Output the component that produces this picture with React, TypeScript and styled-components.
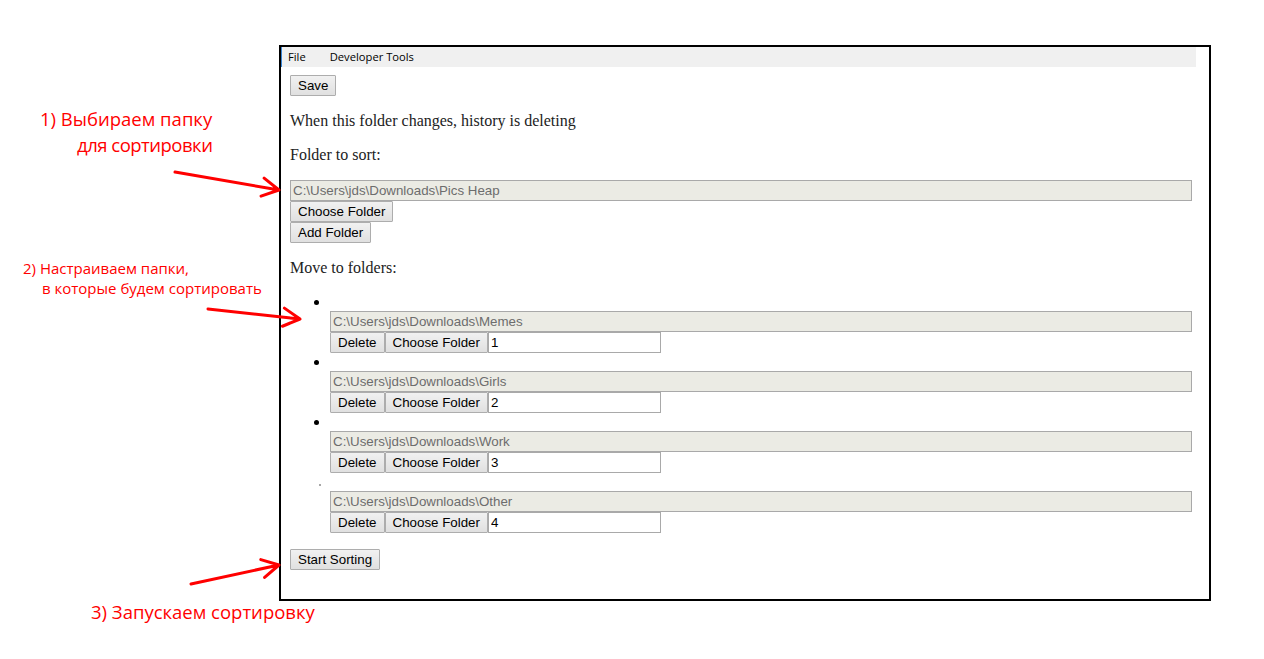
import styled, { createGlobalStyle, css } from 'styled-components'

const GlobalStyle = createGlobalStyle`
  html, body {
    margin: 0;
    padding: 0;
    background: #fff;
  }
`

const Page = styled.div`
  position: relative;
  width: 1264px;
  height: 659px;
  overflow: hidden;
  padding-top: 45px;
  box-sizing: border-box;
`

const Frame = styled.div`
  width: 932px;
  height: 556px;
  margin-left: 279px;
  box-sizing: border-box;
  border: 2px solid #000;
  background: #fff;
`

const MenuBar = styled.div`
  display: flex;
  align-items: center;
  width: 915px;
  height: 20px;
  padding-bottom: 1px;
  box-sizing: border-box;
  background: #f0f0f0;
  border-left: 1px solid #3a86d4;
  font-family: 'Open Sans', sans-serif;
  font-size: 11.2px;
  color: #000;
`

const MenuItem = styled.span`
  padding: 0 6px;
  margin-right: 12px;
`

const Content = styled.div`
  width: 918px;
  margin-left: 1px;
  padding: 8px;
  box-sizing: border-box;
  font-family: 'Liberation Serif', 'Times New Roman', serif;
  font-size: 16px;
  color: #222;
`

const Text = styled.p`
  margin: 16px 0;
  line-height: 18px;
`

const controlFont = css`
  font-family: 'Liberation Sans', Arial, sans-serif;
  font-size: 13.33px;
`

const Button = styled.button<{ $block?: boolean }>`
  ${controlFont};
  display: ${(p) => (p.$block ? 'block' : 'inline-block')};
  height: 21px;
  padding: 0 7px;
  margin: 0;
  box-sizing: border-box;
  border: 1px solid #adadad;
  border-radius: 1px;
  background: linear-gradient(#f1f1f1, #e0e0e0);
  color: #000;
  line-height: 19px;
  white-space: nowrap;
`

const PathInput = styled.input`
  ${controlFont};
  display: block;
  width: 100%;
  height: 21px;
  margin: 0;
  padding: 0 2px;
  box-sizing: border-box;
  border: 1px solid #a9a9a9;
  background: #ebebe4;
  color: #6d6d6d;
`

const OrderInput = styled.input`
  ${controlFont};
  width: 173px;
  height: 21px;
  margin: 0;
  padding: 0 2px;
  box-sizing: border-box;
  border: 1px solid #a9a9a9;
  background: #fff;
  color: #000;
`

const List = styled.ul`
  margin: 16px 0;
  padding-left: 40px;
`

const Item = styled.li<{ $faint?: boolean }>`
  list-style: disc;
  &::marker {
    color: #000;
  }
  ${(p) =>
    p.$faint &&
    css`
      &::marker {
        color: #8a8a8a;
        font-size: 8px;
      }
    `}
`

const ItemHead = styled.div`
  height: 18px;
  line-height: 18px;
`

const ItemRow = styled.div`
  display: flex;
  align-items: stretch;
`

const Callout = styled.div<{ $top: number; $left: number; $size: number; $lh: number }>`
  position: absolute;
  top: ${(p) => p.$top}px;
  left: ${(p) => p.$left}px;
  font-family: 'Open Sans', sans-serif;
  font-size: ${(p) => p.$size}px;
  line-height: ${(p) => p.$lh}px;
  color: #ff0000;
  white-space: nowrap;
`

const CalloutLine = styled.div<{ $indent?: number; $spacing?: number }>`
  padding-left: ${(p) => p.$indent || 0}px;
  letter-spacing: ${(p) => p.$spacing || 0}px;
`

const Arrows = styled.svg`
  position: absolute;
  inset: 0;
  pointer-events: none;
`

const folders = [
  { path: 'C:\\Users\\jds\\Downloads\\Memes', order: '1' },
  { path: 'C:\\Users\\jds\\Downloads\\Girls', order: '2' },
  { path: 'C:\\Users\\jds\\Downloads\\Work', order: '3' },
  { path: 'C:\\Users\\jds\\Downloads\\Other', order: '4' },
]

function arrowPath(x1: number, y1: number, x2: number, y2: number, len = 19, spread = 0.5) {
  const a = Math.atan2(y2 - y1, x2 - x1)
  const w1x = x2 - len * Math.cos(a - spread)
  const w1y = y2 - len * Math.sin(a - spread)
  const w2x = x2 - len * Math.cos(a + spread)
  const w2y = y2 - len * Math.sin(a + spread)
  return `M${x1} ${y1} L${x2} ${y2} M${w1x} ${w1y} L${x2} ${y2} L${w2x} ${w2y}`
}

const arrows = [
  [175, 172, 279, 190],
  [208, 309, 300, 319],
  [191, 584, 279, 565],
]

export default function App() {
  return (
    <Page>
      <GlobalStyle />
      <Frame>
        <MenuBar>
          <MenuItem>File</MenuItem>
          <MenuItem>Developer Tools</MenuItem>
        </MenuBar>
        <Content>
          <Button $block>Save</Button>
          <Text>When this folder changes, history is deleting</Text>
          <Text>Folder to sort:</Text>
          <PathInput disabled value="C:\Users\jds\Downloads\Pics Heap" readOnly />
          <Button $block>Choose Folder</Button>
          <Button $block>Add Folder</Button>
          <Text>Move to folders:</Text>
          <List>
            {folders.map((f, i) => (
              <Item key={f.path} $faint={i === folders.length - 1}>
                <ItemHead>&nbsp;</ItemHead>
                <PathInput disabled value={f.path} readOnly />
                <ItemRow>
                  <Button>Delete</Button>
                  <Button>Choose Folder</Button>
                  <OrderInput value={f.order} readOnly />
                </ItemRow>
              </Item>
            ))}
          </List>
          <Button $block>Start Sorting</Button>
        </Content>
      </Frame>

      <Callout $top={106} $left={40} $size={18.5} $lh={26}>
        <CalloutLine>1) Выбираем папку</CalloutLine>
        <CalloutLine $indent={37} $spacing={-0.5}>для сортировки</CalloutLine>
      </Callout>
      <Callout $top={258} $left={23} $size={15} $lh={20}>
        <CalloutLine>2) Настраиваем папки,</CalloutLine>
        <CalloutLine $indent={19}>в которые будем сортировать</CalloutLine>
      </Callout>
      <Callout $top={599} $left={91} $size={18.5} $lh={26}>
        <CalloutLine>3) Запускаем сортировку</CalloutLine>
      </Callout>

      <Arrows width="1264" height="659" viewBox="0 0 1264 659">
        {arrows.map(([x1, y1, x2, y2], i) => (
          <path
            key={i}
            d={arrowPath(x1, y1, x2, y2)}
            fill="none"
            stroke="#ff0000"
            strokeWidth="3"
            strokeLinecap="round"
            strokeLinejoin="round"
          />
        ))}
      </Arrows>
    </Page>
  )
}
